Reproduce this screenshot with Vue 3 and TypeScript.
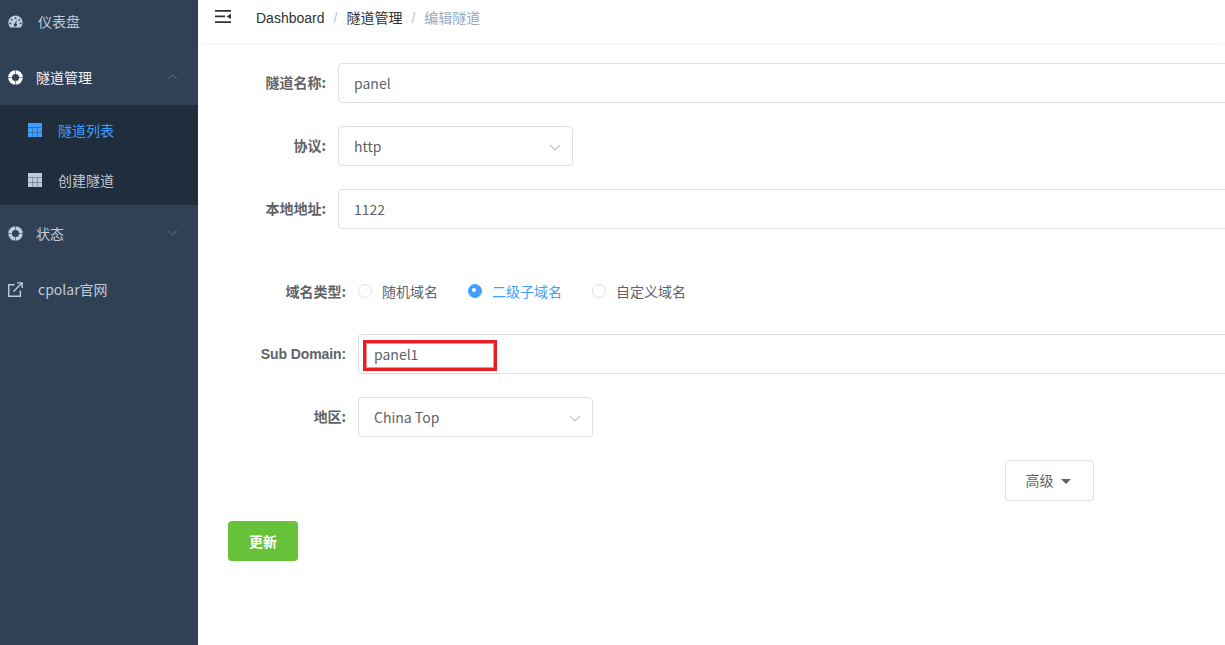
<script setup lang="ts">
const tableCells = 'M0 4.5h14M0 9.5h14M4.7 4.5V14M9.3 4.5V14'
</script>

<template>
  <div class="app">
    <aside class="side">
      <ul class="menu">
        <li class="item">
          <svg class="ic" viewBox="0 0 16 14"><path fill="currentColor" fill-rule="evenodd" d="M8 0.6A7.6 7.6 0 0 0 .4 8.2c0 1.9.6 3.6 1.8 4.9l.4.3h10.8l.4-.3a7.6 7.6 0 0 0 1.8-4.9A7.6 7.6 0 0 0 8 .6zM8 2.4a1 1 0 1 1 0 2 1 1 0 0 1 0-2zM3.9 4.2a1 1 0 1 1 0 2 1 1 0 0 1 0-2zM2.5 8a1 1 0 1 1 0 2 1 1 0 0 1 0-2zM13.5 8a1 1 0 1 1 0 2 1 1 0 0 1 0-2zM12 4.2a1 1 0 1 1 0 2 1 1 0 0 1 0-2zM9.6 5 8.7 9.2a1.7 1.7 0 1 1-1.5-.1z"/></svg>
          <span class="t1">仪表盘</span>
        </li>
        <li class="item">
          <svg class="ic ring on" viewBox="0 0 16 16"><path fill="currentColor" fill-rule="evenodd" d="M8 .2a7.8 7.8 0 1 0 0 15.6A7.8 7.8 0 0 0 8 .2zM8 4.2a3.8 3.8 0 1 1 0 7.6 3.8 3.8 0 0 1 0-7.6z"/><path d="M8 0v4.4M8 11.6V16M0 8h4.4M11.6 8H16" stroke="#304156" stroke-width=".6" fill="none"/></svg>
          <span class="t2 white">隧道管理</span>
          <svg class="chev" viewBox="0 0 12 7"><path d="M1 6l5-5 5 5" fill="none" stroke="currentColor" stroke-width="1"/></svg>
        </li>
        <li class="sub active">
          <svg class="tb" viewBox="0 0 14 14"><rect width="14" height="14" fill="currentColor"/><path :d="tableCells" stroke="#1f2d3d" stroke-opacity=".6" stroke-width=".6" fill="none"/></svg>
          <span>隧道列表</span>
        </li>
        <li class="sub">
          <svg class="tb" viewBox="0 0 14 14"><rect width="14" height="14" fill="currentColor"/><path :d="tableCells" stroke="#1f2d3d" stroke-opacity=".6" stroke-width=".6" fill="none"/></svg>
          <span>创建隧道</span>
        </li>
        <li class="item">
          <svg class="ic ring" viewBox="0 0 16 16"><path fill="currentColor" fill-rule="evenodd" d="M8 .2a7.8 7.8 0 1 0 0 15.6A7.8 7.8 0 0 0 8 .2zM8 4.2a3.8 3.8 0 1 1 0 7.6 3.8 3.8 0 0 1 0-7.6z"/><path d="M8 0v4.4M8 11.6V16M0 8h4.4M11.6 8H16" stroke="#304156" stroke-width=".6" fill="none"/></svg>
          <span class="t2">状态</span>
          <svg class="chev" viewBox="0 0 12 7"><path d="M1 1l5 5 5-5" fill="none" stroke="currentColor" stroke-width="1"/></svg>
        </li>
        <li class="item">
          <svg class="ic" viewBox="0 0 14 14"><path d="M6 2.5H.7v10.8h10.8V8" fill="none" stroke="currentColor" stroke-width="1.3"/><path d="M5 9l7.5-7.5M8.5 .8h4.7v4.7" fill="none" stroke="currentColor" stroke-width="1.3"/></svg>
          <span class="t1">cpolar官网</span>
        </li>
      </ul>
    </aside>

    <main class="main">
      <header class="bar">
        <svg class="ham" viewBox="0 0 16 13"><path fill="#303133" d="M0 0h16v1.7H0zM0 5.6h10v1.7H0zM0 11.3h16V13H0zM16 3.8v5.2l-4.4-2.6z"/></svg>
        <nav class="crumbs">
          <span class="c">Dashboard</span><i>/</i><span class="c">隧道管理</span><i>/</i><span class="last">编辑隧道</span>
        </nav>
      </header>

      <section class="content">
        <div class="group narrow">
          <div class="row">
            <label>隧道名称:</label>
            <div class="input wide">panel</div>
          </div>
          <div class="row">
            <label>协议:</label>
            <div class="input select">http<svg class="arrow" viewBox="0 0 12 7"><path d="M1 1l5 5 5-5" fill="none" stroke="currentColor" stroke-width="1.1"/></svg></div>
          </div>
          <div class="row">
            <label>本地地址:</label>
            <div class="input wide">1122</div>
          </div>
        </div>

        <div class="group broad">
          <div class="row">
            <label class="flat">域名类型:</label>
            <div class="radios">
              <span class="radio"><b></b>随机域名</span>
              <span class="radio on"><b></b>二级子域名</span>
              <span class="radio"><b></b>自定义域名</span>
            </div>
          </div>
          <div class="row">
            <label class="latin">Sub Domain:</label>
            <div class="input wide">panel1<span class="mark"></span></div>
          </div>
          <div class="row">
            <label>地区:</label>
            <div class="input select">China Top<svg class="arrow" viewBox="0 0 12 7"><path d="M1 1l5 5 5-5" fill="none" stroke="currentColor" stroke-width="1.1"/></svg></div>
          </div>
        </div>

        <div class="adv-row">
          <button class="adv"><span class="adv-t">高级</span><span class="caret"></span></button>
        </div>
        <button class="save">更新</button>
      </section>
    </main>
  </div>
</template>

<style>
html, body { margin: 0; background: #fff; }
</style>

<style scoped>
.app {
  display: flex;
  width: 1225px;
  height: 645px;
  overflow: hidden;
  font-family: "Noto Sans CJK SC", "Noto Sans", sans-serif;
  font-size: 14px;
}
.side { width: 198px; flex: none; background: #304156; color: #bfcbd9; overflow: hidden; }
.menu { list-style: none; margin: -7px 0 0; padding: 0; }
.item { height: 56px; display: flex; align-items: center; padding-left: 8px; position: relative; }
.ic { width: 15px; height: 15px; flex: none; }
.ring.on { color: #fff; }
.t1 { margin-left: 15px; }
.t2 { margin-left: 13px; }
.white { color: #f4f4f5; }
.chev { position: absolute; left: 167px; top: 25px; width: 11px; height: 6px; color: #6d7c8e; }
.sub { height: 50px; background: #1f2d3d; display: flex; align-items: center; padding-left: 28px; }
.sub span { margin-left: 16px; }
.sub.active { color: #409eff; }
.tb { width: 14px; height: 14px; flex: none; }

.main { flex: 1; min-width: 0; }
.bar {
  height: 43px;
  display: flex;
  align-items: flex-start;
  box-shadow: 0 1px 4px rgba(0, 21, 41, .08);
  font-family: "Liberation Sans", "Noto Sans CJK SC", sans-serif;
}
.ham { width: 16px; height: 13px; margin: 10px 0 0 17px; flex: none; }
.crumbs { margin: 7px 0 0 25px; line-height: 22px; color: #303133; display: flex; }
.crumbs i { font-style: normal; color: #c0c4cc; margin: 0 9px; }
.last { color: #97a8be; }

.content { padding: 20px 0 0 30px; }
.group .row { display: flex; align-items: center; height: 40px; margin-bottom: 23px; }
.row label { flex: none; text-align: right; padding: 0 12px 2px 0; box-sizing: border-box; font-weight: 700; color: #606266; }
.row label.flat { padding-bottom: 0; }
.row label.latin { font-family: "Liberation Sans", sans-serif; padding-bottom: 0; letter-spacing: -.1px; }
.narrow label { width: 110px; }
.broad label { width: 130px; }
.broad { margin-top: 42px; }
.input {
  box-sizing: border-box;
  height: 40px;
  line-height: 38px;
  padding: 0 15px;
  border: 1px solid #dcdfe6;
  border-radius: 4px;
  color: #606266;
  position: relative;
  flex: none;
}
.wide { width: 1000px; }
.select { width: 235px; }
.arrow { position: absolute; right: 11px; top: 17px; width: 12px; height: 7px; color: #c0c4cc; }
.mark {
  position: absolute;
  left: 4px;
  top: 5px;
  width: 134px;
  height: 31px;
  box-sizing: border-box;
  border: 3px solid #ec1c24;
  box-shadow: inset 0 0 0 1px rgba(236, 28, 36, .5);
}
.radios { display: flex; color: #606266; }
.radio { display: flex; align-items: center; margin-right: 30px; }
.radio b {
  box-sizing: border-box;
  width: 14px;
  height: 14px;
  border: 1px solid #dcdfe6;
  border-radius: 50%;
  margin-right: 10px;
  position: relative;
}
.radio.on { color: #409eff; }
.radio.on b { background: #409eff; border-color: #409eff; }
.radio.on b::after {
  content: "";
  position: absolute;
  left: 3px;
  top: 3px;
  width: 4px;
  height: 4px;
  border-radius: 50%;
  background: #fff;
}
.adv-row { width: 866px; display: flex; justify-content: flex-end; }
.adv, .save { font: inherit; cursor: pointer; border-radius: 4px; }
.adv {
  box-sizing: border-box;
  width: 89px;
  height: 41px;
  padding: 0 0 0 1px;
  background: #fff;
  border: 1px solid #dcdfe6;
  color: #606266;
  display: flex;
  align-items: center;
  justify-content: center;
}
.adv-t { position: relative; top: -1px; margin-left: -4px; }
.caret {
  width: 0;
  height: 0;
  margin: 1px 0 0 7px;
  border: 5px solid transparent;
  border-top-color: #606266;
  border-bottom: 0;
}
.save {
  display: block;
  margin-top: 20px;
  width: 70px;
  height: 40px;
  background: #67c23a;
  border: 0;
  color: #fff;
  font-weight: 700;
}
</style>
